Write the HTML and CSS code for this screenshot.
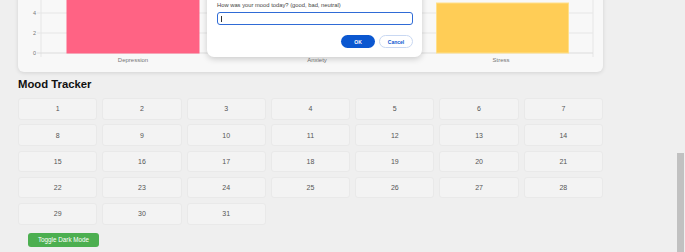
FILE: index.html
```html
<!DOCTYPE html>
<html lang="en">
<head>
    <meta charset="UTF-8" />
    <meta name="viewport" content="width=device-width, initial-scale=1.0"/>
    <title>Mental Health Tracker</title>
    <link rel="stylesheet" href="styles.css">
</head>
<body>
    <div class="page">
        <div class="chart-card">
            <svg class="chart" viewBox="0 0 585 140" width="585" height="140">
                <g class="grid">
                    <line x1="19" y1="1" x2="575" y2="1"/>
                    <line x1="19" y1="21" x2="575" y2="21"/>
                    <line x1="19" y1="41" x2="575" y2="41"/>
                    <line x1="19" y1="61" x2="575" y2="61"/>
                    <line x1="19" y1="81" x2="575" y2="81"/>
                    <line x1="19" y1="101" x2="575" y2="101"/>
                    <line x1="23" y1="0" x2="23" y2="125"/>
                    <line x1="207" y1="0" x2="207" y2="125"/>
                    <line x1="391" y1="0" x2="391" y2="125"/>
                    <line x1="575" y1="0" x2="575" y2="125"/>
                </g>
                <line class="axis" x1="19" y1="121" x2="575" y2="121"/>
                <g class="ticks">
                    <text x="18" y="83">4</text>
                    <text x="18" y="103">2</text>
                    <text x="18" y="123">0</text>
                </g>
                <rect x="49" y="31" width="132" height="90" fill="#ff6384" stroke="#ff6384"/>
                <rect x="233" y="61" width="132" height="60" fill="#36a2eb" stroke="#36a2eb"/>
                <rect x="418.5" y="71" width="132" height="50" fill="#ffcd56" stroke="#ffe08a"/>
                <g class="labels">
                    <text x="115" y="130">Depression</text>
                    <text x="299" y="130">Anxiety</text>
                    <text x="483" y="130">Stress</text>
                </g>
            </svg>
        </div>

        <h2>Mood Tracker</h2>
        <div class="calendar" id="calendar"></div>

        <button class="toggle">Toggle Dark Mode</button>
    </div>

    <div class="prompt">
        <p>How was your mood today? (good, bad, neutral)</p>
        <div class="prompt-input"><span class="caret"></span></div>
        <div class="prompt-actions">
            <button class="btn-ok">OK</button>
            <button class="btn-cancel">Cancel</button>
        </div>
    </div>

    <div class="scroll-thumb"></div>

    <script>
        const calendar = document.getElementById("calendar");
        for (let day = 1; day <= 31; day++) {
            const cell = document.createElement("div");
            cell.className = "day";
            cell.innerText = day;
            calendar.appendChild(cell);
        }
    </script>
</body>
</html>
```

FILE: styles.css
```css
body {
    margin: 0;
    font-family: "Liberation Sans", Arial, sans-serif;
    background-color: #efefef;
    overflow: hidden;
}
.page {
    width: 585px;
    padding-left: 18px;
}
.chart-card {
    margin-top: -68px;
    height: 140px;
    background: #f8f8f8;
    border-radius: 6px;
    box-shadow: 0 1px 4px rgba(0,0,0,0.12);
}
.chart {
    display: block;
}
.grid line {
    stroke: #e6e6e6;
    stroke-width: 1;
}
.axis {
    stroke: #dcdcdc;
    stroke-width: 1;
}
.ticks text {
    font-size: 5.5px;
    fill: #777;
    text-anchor: end;
}
.labels text {
    font-size: 6px;
    fill: #777;
    text-anchor: middle;
}
h2 {
    margin: 5px 0 7px;
    font-size: 11.3px;
    line-height: 14px;
    color: #111;
}
.calendar {
    display: grid;
    grid-template-columns: repeat(7, 1fr);
    grid-auto-rows: 21.5px;
    column-gap: 5px;
    row-gap: 4.8px;
}
.day {
    display: flex;
    align-items: center;
    justify-content: center;
    background: #f3f3f3;
    border: 1px solid #e9e9e9;
    border-radius: 3px;
    font-size: 7px;
    color: #555;
}
.toggle {
    display: block;
    margin: 8px 0 0 10px;
    width: 71px;
    height: 14px;
    padding: 0;
    background-color: #4caf50;
    color: white;
    border: none;
    border-radius: 3px;
    font-family: inherit;
    font-size: 6.3px;
}
.prompt {
    position: absolute;
    left: 207px;
    top: -30px;
    width: 215px;
    height: 87px;
    box-sizing: border-box;
    padding: 0 9px 9px 10px;
    display: flex;
    flex-direction: column;
    justify-content: flex-end;
    background: #fff;
    border-radius: 7px;
    box-shadow: 0 2px 6px rgba(0,0,0,0.18);
}
.prompt p {
    margin: 0 0 4px;
    font-size: 5.8px;
    color: #444;
}
.prompt-input {
    height: 13px;
    box-sizing: border-box;
    border: 1.5px solid #2f6bd6;
    border-radius: 3px;
    display: flex;
    align-items: center;
    padding-left: 3px;
}
.caret {
    width: 1px;
    height: 6px;
    background: #333;
}
.prompt-actions {
    display: flex;
    justify-content: flex-end;
    gap: 4px;
    margin-top: 10px;
}
.prompt-actions button {
    width: 34px;
    height: 13px;
    padding: 0;
    border-radius: 7px;
    font-family: inherit;
    font-size: 5px;
    font-weight: bold;
}
.btn-ok {
    background: #0b57d0;
    color: #fff;
    border: none;
}
.btn-cancel {
    background: #fff;
    color: #0b57d0;
    border: 1px solid #c9d8f2;
}
.scroll-thumb {
    position: fixed;
    right: 1px;
    top: 153px;
    bottom: 0;
    width: 7px;
    background: #c1c1c1;
}
```
